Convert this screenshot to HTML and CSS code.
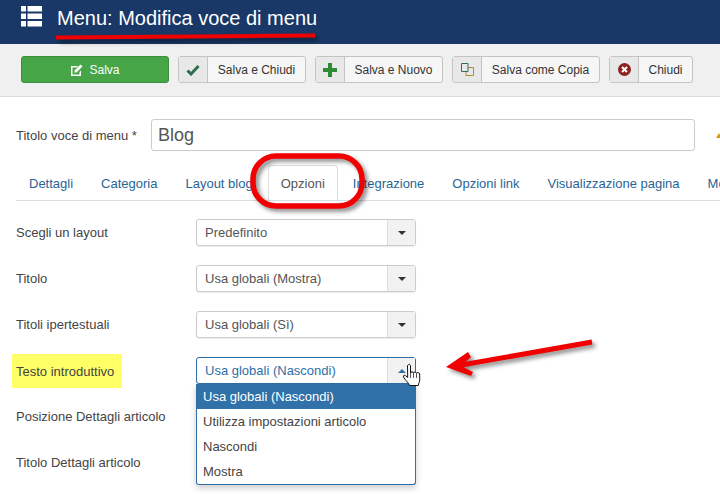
FILE: index.html
```html
<!DOCTYPE html>
<html lang="it">
  <head>
    <meta charset="UTF-8" />
    <title>Menu: Modifica voce di menu</title>
    <link rel="stylesheet" href="styles.css">
  </head>
  <body>
    <header class="topbar">
      <svg class="topbar-icon" width="21" height="21" viewBox="0 0 21 21" fill="#fff">
        <rect x="0" y="0" width="5" height="5.5"/><rect x="6.5" y="0" width="14.5" height="5.5"/>
        <rect x="0" y="7.5" width="5" height="5.5"/><rect x="6.5" y="7.5" width="14.5" height="5.5"/>
        <rect x="0" y="15" width="5" height="5.5"/><rect x="6.5" y="15" width="14.5" height="5.5"/>
      </svg>
      <h1>Menu: Modifica voce di menu</h1>
    </header>

    <div class="toolbar">
      <button class="btn-save">
        <svg width="13" height="12" viewBox="0 0 13 12"><path d="M1.5 2h6.5L6.500 3.500H2.500v7h7V8L11 6.500V12H1V2z" fill="#fff"/><path d="M4.500 6.500 10.500.5l2 2-6 6h-2z" fill="#fff"/></svg>
        Salva
      </button>
      <button class="btn btn-wide">
        <span class="btn-icon"><svg width="14" height="12" viewBox="0 0 14 12"><path d="M1.500 6.500 5 10l7.500-8" fill="none" stroke="#2f6f4f" stroke-width="3"/></svg></span>
        <span class="btn-text">Salva e Chiudi</span>
      </button>
      <button class="btn btn-wide">
        <span class="btn-icon"><svg width="14" height="14" viewBox="0 0 14 14"><path d="M5 0h4v5h5v4H9v5H5V9H0V5h5z" fill="#2f8a35"/></svg></span>
        <span class="btn-text">Salva e Nuovo</span>
      </button>
      <button class="btn btn-copy">
        <span class="btn-icon"><svg width="13" height="13" viewBox="0 0 13 13" fill="none"><path d="M5 4.500h7.500v8H5z" stroke="#b08a3a"/><path d="M.5.500h6.500v8H.5z" fill="#e8e8e8" stroke="#2f6f5f"/></svg></span>
        <span class="btn-text">Salva come Copia</span>
      </button>
      <button class="btn btn-close">
        <span class="btn-icon"><svg width="13" height="13" viewBox="0 0 13 13"><circle cx="6.500" cy="6.500" r="6.500" fill="#8f2323"/><path d="M4 4l5 5M9 4l-5 5" stroke="#fff" stroke-width="2"/></svg></span>
        <span class="btn-text">Chiudi</span>
      </button>
    </div>

    <main class="content">
      <div class="title-row">
        <label class="title-label">Titolo voce di menu *</label>
        <div class="title-input">Blog</div>
        <i class="title-mark"></i>
      </div>

      <nav class="tabs">
        <a>Dettagli</a>
        <a>Categoria</a>
        <a>Layout blog</a>
        <a class="active">Opzioni</a>
        <a>Integrazione</a>
        <a>Opzioni link</a>
        <a>Visualizzazione pagina</a>
        <a>Moduli</a>
      </nav>

      <div class="form-row">
        <label>Scegli un layout</label>
        <div class="select"><span class="select-value">Predefinito</span><span class="select-arrow"><i class="caret"></i></span></div>
      </div>
      <div class="form-row">
        <label>Titolo</label>
        <div class="select"><span class="select-value">Usa globali (Mostra)</span><span class="select-arrow"><i class="caret"></i></span></div>
      </div>
      <div class="form-row">
        <label>Titoli ipertestuali</label>
        <div class="select"><span class="select-value">Usa globali (Sì)</span><span class="select-arrow"><i class="caret"></i></span></div>
      </div>
      <div class="form-row">
        <label><span class="marker">Testo introduttivo</span></label>
        <div class="select open">
          <span class="select-value">Usa globali (Nascondi)</span><span class="select-arrow"><i class="caret up"></i></span>
          <ul class="dropdown">
            <li class="selected">Usa globali (Nascondi)</li>
            <li>Utilizza impostazioni articolo</li>
            <li>Nascondi</li>
            <li>Mostra</li>
          </ul>
        </div>
      </div>
      <div class="form-row">
        <label>Posizione Dettagli articolo</label>
      </div>
      <div class="form-row">
        <label>Titolo Dettagli articolo</label>
      </div>
    </main>

    <!-- annotations drawn over the screenshot -->
    <svg class="notes" width="720" height="494" viewBox="0 0 720 494">
      <g class="red-note">
        <path d="M56 37.500 315 35.500" fill="none" stroke="#f00000" stroke-width="4"/>
        <rect x="253" y="156" width="109" height="50" rx="23" fill="none" stroke="#f00000" stroke-width="5.500"/>
        <path d="M592 342 456 366" fill="none" stroke="#f00000" stroke-width="5"/>
        <path d="M446 367 468 352 471 357 461 366 473 372 471 376z" fill="#f00000"/>
      </g>
      <path class="hand" d="M407.500 366c0-2 3-2 3 0v7c0-1.500 3-1.500 3 0 0-1.200 3-1.200 3 .3 .5-1 3-1 3.200.7v5.500c0 2.500-1 3.500-1.500 6h-8.700c-.5-2.500-4.500-5.500-6-8.500-.6-1.500 1-2.500 2.200-1.200l2 1.700z" fill="#fff" stroke="#111" stroke-width="1"/>
      <path d="M410.500 373v5M413.500 373v5M416.500 373.500v4.500" fill="none" stroke="#111" stroke-width=".7"/>
    </svg>
  </body>
</html>
```

FILE: styles.css
```css
body {
  font-family: "Liberation Sans", Arial, sans-serif;
  font-size: 13px;
  color: #444;
  margin: 0;
  background-color: white;
  width: 720px;
  height: 494px;
  overflow: hidden;
  position: relative;
}
.topbar {
  display: flex;
  align-items: center;
  height: 44px;
  padding-left: 21px;
  box-sizing: border-box;
  background-color: #1a3867;
}
.topbar-icon {
  margin-top: -11px;
}
.topbar h1 {
  margin: -8px 0 0 15px;
  font-size: 20px;
  font-weight: normal;
  color: white;
}
.toolbar {
  display: flex;
  gap: 9px;
  height: 53px;
  padding: 12px 0 0 21px;
  box-sizing: border-box;
  background-color: #f0f0f0;
  border-bottom: 1px solid #dcdcdc;
}
button {
  font-family: inherit;
  font-size: 12px;
  height: 27px;
  padding: 0;
  border-radius: 3px;
}
.btn-save {
  display: flex;
  align-items: center;
  justify-content: center;
  gap: 6px;
  width: 148px;
  color: white;
  background-color: #46a546;
  border: 1px solid #3d8f3d;
}
.btn {
  display: flex;
  align-items: stretch;
  color: #333;
  background-color: #f6f6f6;
  border: 1px solid #c4c4c4;
}
.btn-wide {
  width: 128px;
}
.btn-copy {
  width: 148px;
}
.btn-close {
  width: 84px;
}
.btn-icon {
  display: flex;
  align-items: center;
  justify-content: center;
  width: 28px;
  flex: none;
  background-color: #e8e8e8;
  border-right: 1px solid #c4c4c4;
}
.btn-text {
  flex: 1;
  align-self: center;
  text-align: center;
}
.content {
  padding: 0 0 0 16px;
}
.title-row {
  display: flex;
  align-items: center;
  height: 32px;
  margin-top: 22px;
}
.title-label {
  width: 135px;
  flex: none;
}
.title-input {
  width: 536px;
  height: 30px;
  flex: none;
  padding-left: 6px;
  line-height: 30px;
  font-size: 18px;
  color: #555;
  border: 1px solid #ccc;
  border-radius: 3px;
}
.title-mark {
  margin-left: 21px;
  border-left: 3px solid transparent;
  border-right: 3px solid transparent;
  border-bottom: 5px solid #d9961a;
}
.tabs {
  display: flex;
  height: 35px;
  margin-top: 14px;
  border-bottom: 1px solid #ddd;
  white-space: nowrap;
  overflow: hidden;
}
.tabs a {
  padding: 10px 12px 0;
  margin-right: 2px;
  color: #2a6496;
  border: 1px solid transparent;
  border-bottom: none;
}
.tabs a.active {
  color: #555;
  background-color: white;
  border-color: #ddd;
  border-radius: 4px 4px 0 0;
}
.form-row {
  display: flex;
  align-items: center;
  height: 27px;
  margin-bottom: 19px;
}
.tabs + .form-row {
  margin-top: 18px;
}
.form-row label {
  width: 180px;
  flex: none;
}
.marker {
  display: inline-block;
  margin-left: -4px;
  padding: 10px 8px 9px 4px;
  background-color: #ffff66;
}
.select {
  display: flex;
  position: relative;
  width: 218px;
  height: 25px;
  line-height: 25px;
  background-color: white;
  border: 1px solid #ccc;
  border-radius: 3px;
  box-shadow: 0 1px 1px rgba(0, 0, 0, 0.08);
}
.select-value {
  flex: 1;
  padding-left: 8px;
  color: #555;
}
.select-arrow {
  display: flex;
  align-items: center;
  justify-content: center;
  width: 27px;
  background-color: #f2f2f2;
  border-left: 1px solid #ddd;
}
.caret {
  width: 0;
  height: 0;
  border-left: 4px solid transparent;
  border-right: 4px solid transparent;
  border-top: 4px solid #333;
}
.caret.up {
  border-top: none;
  border-bottom: 4px solid #2a6fa8;
}
.select.open {
  border-color: #2f6fa7;
}
.select.open .select-value {
  color: #2f6fa7;
}
.dropdown {
  position: absolute;
  top: 26px;
  left: -1px;
  width: 218px;
  margin: 0;
  padding: 0;
  list-style: none;
  background-color: white;
  border: 1px solid #2f6fa7;
  border-top: none;
  border-radius: 0 0 3px 3px;
  box-shadow: 0 3px 6px rgba(0, 0, 0, 0.2);
  z-index: 2;
}
.dropdown li {
  height: 25px;
  padding-left: 6px;
  line-height: 25px;
  color: #444;
}
.dropdown li.selected {
  color: white;
  background-color: #3071a9;
}
.notes {
  position: absolute;
  top: 0;
  left: 0;
  z-index: 3;
}
.red-note {
  filter: drop-shadow(3px 3px 2px rgba(0, 0, 0, 0.45));
}
```
